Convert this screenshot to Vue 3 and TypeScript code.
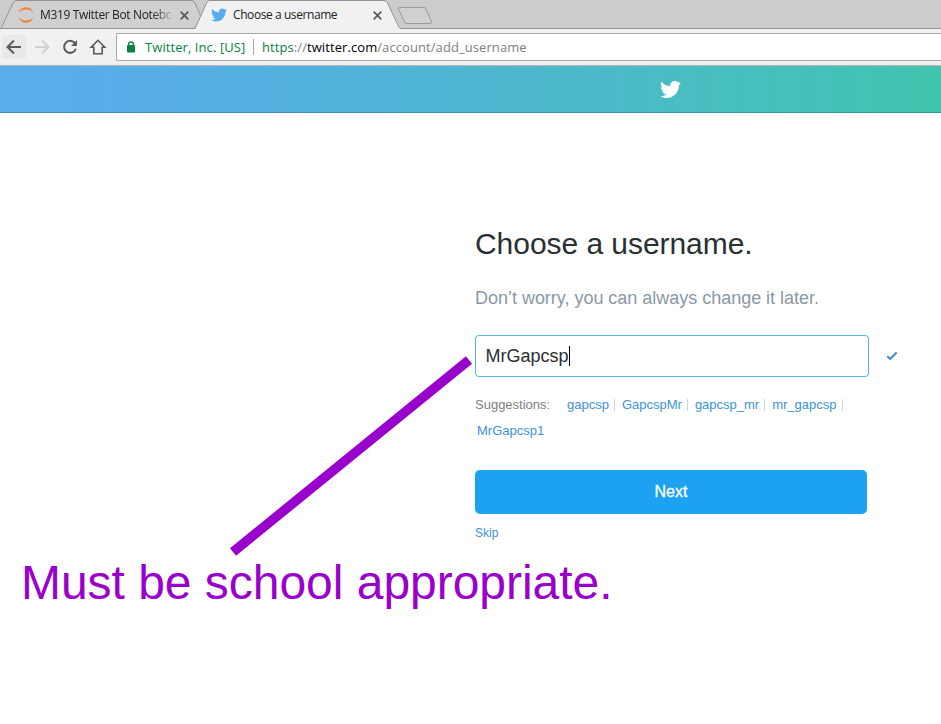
<script setup lang="ts">
import { ref } from 'vue'

const username = ref('MrGapcsp')
const suggestions: string[] = ['gapcsp', 'GapcspMr', 'gapcsp_mr', 'mr_gapcsp', 'MrGapcsp1']
const bird =
  'M23.953 4.57a10 10 0 01-2.825.775 4.958 4.958 0 002.163-2.723c-.951.555-2.005.959-3.127 1.184a4.92 4.92 0 00-8.384 4.482C7.69 8.095 4.067 6.13 1.64 3.162a4.822 4.822 0 00-.666 2.475c0 1.71.87 3.213 2.188 4.096a4.904 4.904 0 01-2.228-.616v.06a4.923 4.923 0 003.946 4.827 4.996 4.996 0 01-2.212.085 4.936 4.936 0 004.604 3.417 9.867 9.867 0 01-6.102 2.105c-.39 0-.779-.023-1.17-.067a13.995 13.995 0 007.557 2.209c9.053 0 13.998-7.496 13.998-13.985 0-.21 0-.42-.015-.63A9.935 9.935 0 0024 4.59z'
</script>

<template>
  <div class="screen">
    <div class="tabs">
      <svg class="tab-shapes" width="941" height="29" viewBox="0 0 941 29">
        <path d="M1 28.500L13 3Q14.500 .5 17 .5H191.500Q194 .5 195 3L206 28.500Z" fill="#d0d0d0" stroke="#929292" />
        <path d="M0 28.500H941" stroke="#929292" />
        <path d="M195 29L206.500 3Q207.500 .5 210 .5H384Q386.500 .5 387.500 3L399.500 27.500L401 29Z" fill="#f1f1f1" />
        <path d="M193 28.500H195L206.500 3Q207.500 .5 210 .5H384Q386.500 .5 387.500 3L399 27.500L401 28.500" fill="none" stroke="#929292" />
        <path d="M400 7.500H424Q425.500 7.500 426 9L431.500 22Q432 23.500 430.500 23.500H407Q405 23.500 404.500 22L398.500 9Q398 7.500 400 7.500Z" fill="#d0d0d0" stroke="#9a9a9a" />
      </svg>
      <div class="tab first">
        <svg class="favicon" width="16" height="16" viewBox="0 0 16 16" fill="#f08433">
          <path d="M.7 5.500C2 1.800 5 .3 8 .3s6 1.500 7.300 5.200C13.500 3.500 11 2.500 8 2.500S2.500 3.500.7 5.500Z" />
          <path d="M.7 10.500C2 14.200 5 15.700 8 15.700s6-1.500 7.300-5.200C13.500 12.500 11 13.500 8 13.500S2.500 12.500.7 10.500Z" />
        </svg>
        <span class="title faded">M319 Twitter Bot Notebo</span>
        <svg class="close" width="9" height="9" viewBox="0 0 9 9"><path d="M.7.7l7.600 7.600M8.300.7L.7 8.300" /></svg>
      </div>
      <div class="tab second">
        <svg class="favicon" width="16" height="16" viewBox="0 0 24 24" fill="#55acee"><path :d="bird" /></svg>
        <span class="title">Choose a username</span>
        <svg class="close" width="9" height="9" viewBox="0 0 9 9"><path d="M.7.7l7.600 7.600M8.300.7L.7 8.300" /></svg>
      </div>
    </div>

    <div class="toolbar">
      <span class="nav hot">
        <svg width="24" height="24" viewBox="0 0 24 24"><path d="M19 12H6M12 5.500L5.500 12L12 18.500" /></svg>
      </span>
      <span class="nav dim">
        <svg width="24" height="24" viewBox="0 0 24 24"><path d="M5 12H18M12 5.500L18.500 12L12 18.500" /></svg>
      </span>
      <span class="nav">
        <svg width="24" height="24" viewBox="0 0 24 24"><path d="M16.700 8A6 6 0 1 0 17.800 13.700" /><path d="M19 5V11H13Z" class="solid" /></svg>
      </span>
      <span class="nav">
        <svg width="24" height="24" viewBox="0 0 24 24"><path class="thin" d="M12 5.300L5.200 12.200H7.800V18.800H16.200V12.200H18.800Z" /></svg>
      </span>
      <div class="address">
        <svg class="lock" width="8" height="12" viewBox="0 0 8 12">
          <path d="M1.700 5V3Q1.700 1 4 1T6.300 3V5" fill="none" stroke="#0b8043" stroke-width="1.400" />
          <rect y="4" width="8" height="7.500" rx=".7" fill="#0b8043" />
        </svg>
        <span class="owner">Twitter, Inc. [US]</span>
        <span class="rule"></span>
        <span class="url"><span class="scheme">https</span>://<span class="host">twitter.com</span>/account/add_username</span>
      </div>
    </div>

    <header class="banner">
      <svg width="21" height="21" viewBox="0 0 24 24" fill="#fff"><path :d="bird" /></svg>
    </header>

    <main class="form">
      <h1>Choose a username.</h1>
      <p class="lead">Don’t worry, you can always change it later.</p>
      <div class="entry">
        <div class="field"><span>{{ username }}</span><i class="caret"></i></div>
        <svg width="12" height="10" viewBox="0 0 12 10"><path d="M1.200 5.200L4.200 8L10.700 1.500" fill="none" stroke="#3b88c3" stroke-width="1.900" /></svg>
      </div>
      <div class="suggestions">
        <span class="label">Suggestions:</span>
        <span v-for="(name, i) in suggestions" :key="name" class="item" :class="'s' + i">
          <a>{{ name }}</a><b v-if="i < suggestions.length - 1"></b>
        </span>
      </div>
      <button class="next">Next</button>
      <a class="skip">Skip</a>
    </main>

    <svg class="pointer" width="941" height="724" viewBox="0 0 941 724">
      <path d="M233 552L469 360" stroke="#9900cc" stroke-width="9.600" />
    </svg>
    <div class="note">Must be school appropriate.</div>
  </div>
</template>

<style>
body {
  margin: 0;
  background: #fff;
}
</style>

<style scoped>
.screen {
  position: relative;
  width: 941px;
  height: 724px;
  overflow: hidden;
  background: #fff;
  font-family: "Liberation Sans", Arial, sans-serif;
}
.tabs {
  position: relative;
  display: flex;
  height: 29px;
  background: #ccc;
  font: 12px/16px "Open Sans", "Noto Sans", sans-serif;
  color: #222;
}
.tab-shapes,
.pointer {
  position: absolute;
  left: 0;
  top: 0;
  pointer-events: none;
}
.tab {
  position: relative;
  display: flex;
  align-items: center;
  height: 30px;
  box-sizing: border-box;
}
.first {
  width: 193px;
  padding: 0 4px 0 18px;
}
.second {
  width: 190px;
  padding-left: 18px;
}
.favicon {
  flex: none;
}
.title {
  flex: none;
  width: 131px;
  margin-left: 6px;
  white-space: nowrap;
  letter-spacing: -0.42px;
}
.faded {
  letter-spacing: -0.36px;
  -webkit-mask-image: linear-gradient(90deg, #000 112px, transparent 136px);
  mask-image: linear-gradient(90deg, #000 112px, transparent 136px);
}
.close {
  flex: none;
  margin-left: 9px;
}
.close path {
  stroke: #5a5a5a;
  stroke-width: 1.7;
}
.toolbar {
  display: flex;
  align-items: center;
  height: 37px;
  box-sizing: border-box;
  padding-left: 2px;
  background: #f1f1f1;
  border-bottom: 1px solid #b4b4b4;
}
.nav {
  display: flex;
  flex: none;
  width: 24px;
  height: 24px;
  margin-right: 4px;
}
.hot {
  background: #e9e9e9;
  border-radius: 2px;
}
.nav path {
  fill: none;
  stroke: #5a5a5a;
  stroke-width: 2;
}
.nav .thin {
  stroke-width: 1.6;
}
.nav .solid {
  fill: #5a5a5a;
  stroke: none;
}
.dim path {
  stroke: #d0d0d0;
}
.address {
  display: flex;
  align-items: center;
  flex: 1;
  height: 28px;
  box-sizing: border-box;
  margin-left: 2px;
  padding-left: 10px;
  background: #fff;
  border: 1px solid #a9a9a9;
  border-right: 0;
  border-radius: 2px 0 0 2px;
  font: 13px/18px "Open Sans", "Noto Sans", sans-serif;
  letter-spacing: 0.08px;
  color: #808080;
  white-space: nowrap;
}
.lock {
  margin-right: 10px;
}
.owner {
  width: 108px;
  color: #0b8043;
}
.rule {
  width: 1px;
  height: 16px;
  margin-right: 8px;
  background: #aaa;
}
.scheme {
  color: #0b8043;
}
.host {
  color: #000;
}
.banner {
  display: flex;
  align-items: center;
  height: 47px;
  box-sizing: border-box;
  padding-left: 660px;
  background: linear-gradient(90deg, #5aadec 0, #59adea 60px, #54b0e0 260px, #4eb6d1 480px, #47bec0 720px, #41c4af 941px);
  border-bottom: 1px solid rgba(20, 80, 110, 0.35);
}
.form {
  display: flex;
  flex-direction: column;
  align-items: flex-start;
  padding: 112px 0 0 475px;
}
h1 {
  margin: 0;
  font-size: 30px;
  line-height: 38px;
  font-weight: 400;
  letter-spacing: -0.05px;
  color: #292f33;
}
.lead {
  margin: 24px 0 0;
  font-size: 18px;
  line-height: 22px;
  letter-spacing: -0.02px;
  color: #8899a6;
}
.entry {
  display: flex;
  align-items: center;
  gap: 17px;
  margin-top: 26px;
}
.field {
  display: flex;
  align-items: center;
  width: 394px;
  height: 42px;
  box-sizing: border-box;
  padding-left: 10px;
  border: 1px solid #55b4e9;
  border-radius: 4px;
  font-size: 18px;
  color: #292f33;
}
.field span {
  margin-left: -0.5px;
}
.caret {
  width: 1px;
  height: 20px;
  background: #000;
}
.suggestions {
  display: flex;
  flex-wrap: wrap;
  width: 392px;
  margin-top: 15px;
  font-size: 13px;
  line-height: 26px;
  color: #808080;
}
.label {
  width: 92px;
}
.item {
  display: flex;
  align-items: center;
}
.item b {
  width: 1px;
  height: 12px;
  margin: 0 7px 0 5px;
  background: #ccd6dd;
}
.s4 {
  padding-left: 2px;
}
.suggestions a,
.skip {
  color: #3b94d9;
}
.next {
  width: 392px;
  height: 44px;
  margin-top: 26px;
  padding: 0;
  border: 0;
  border-radius: 5px;
  background: #1da1f2;
  color: #fff;
  font: 16px/42px "Liberation Sans", Arial, sans-serif;
  -webkit-text-stroke: 0.3px #fff;
}
.skip {
  margin-top: 11px;
  font-size: 12px;
  line-height: 16px;
}
.note {
  position: absolute;
  left: 21px;
  top: 555px;
  font-size: 48px;
  line-height: 56px;
  letter-spacing: -0.03px;
  color: #9900cc;
  white-space: nowrap;
}
</style>
